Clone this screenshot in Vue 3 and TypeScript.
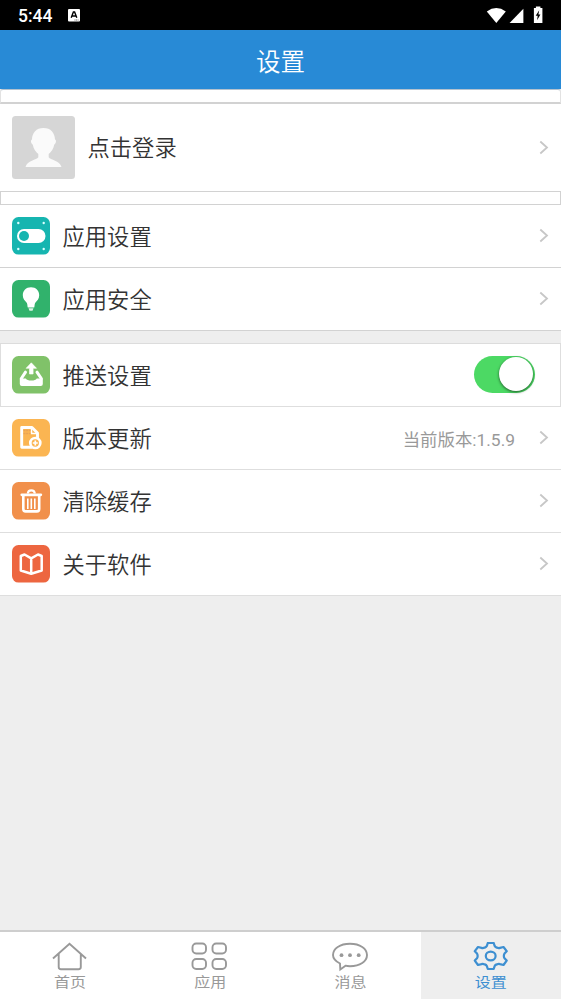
<script setup lang="ts">
type IconName = 'switch' | 'bulb' | 'push' | 'update' | 'trash' | 'book'

interface Row {
  icon: IconName
  label: string
  note?: string
  toggle?: boolean
}

const general: Row[] = [
  { icon: 'switch', label: '应用设置' },
  { icon: 'bulb', label: '应用安全' },
]

const system: Row[] = [
  { icon: 'push', label: '推送设置', toggle: true },
  { icon: 'update', label: '版本更新', note: '当前版本:1.5.9' },
  { icon: 'trash', label: '清除缓存' },
  { icon: 'book', label: '关于软件' },
]

const groups: Row[][] = [general, system]

const tabs = [
  { id: 'home', label: '首页' },
  { id: 'apps', label: '应用' },
  { id: 'message', label: '消息' },
  { id: 'settings', label: '设置' },
]
const activeTab = 'settings'
</script>

<template>
  <div class="screen">
    <div class="status">
      <span class="clock">5:44</span>
      <svg class="badge" width="12" height="13" viewBox="0 0 12 13">
        <rect width="12" height="12.6" rx="1" fill="#fff" />
        <path d="M3.2 8.8 5.4 3h1.2l2.2 5.8M4.1 7h3.8" fill="none" stroke="#000" stroke-width="1.4" />
        <path d="M6.5 11h4" stroke="#666" stroke-width="1" stroke-dasharray="1 .6" />
      </svg>
      <svg class="signals" width="58" height="18" viewBox="0 0 58 18">
        <path d="M.8 5.4Q10.3-1.2 19.8 5.4L10.3 17z" fill="#fff" />
        <path d="M37.4 2.8V17H23.6z" fill="#fff" />
        <path d="M47.900 2h2V.5h4.500V2h2v15h-8.500z" fill="#fff" />
        <path d="m53.200 4.2-3.500 5.600h2l-.6 4.400 3.300-5.700h-2z" fill="#000" />
      </svg>
    </div>

    <header class="header">设置</header>
    <div class="spacer first"></div>

    <div class="profile">
      <svg class="avatar" width="63" height="63" viewBox="0 0 63 63">
        <rect width="63" height="63" rx="3.5" fill="#d6d6d6" />
        <path
          d="M31.500 12c7.200 0 11.300 4.800 11.500 11.500 1.500.5 1.300 4-.7 5-1 4.800-3 7.500-5.600 9.500v3.200c1.700 2.800 11 3 12.800 9.800H13.500c1.800-6.800 11.100-7 12.800-9.800V38c-2.600-2-4.600-4.700-5.600-9.500-2-1-2.200-4.500-.7-5C20.200 16.800 24.300 12 31.500 12z"
          fill="#fafafa"
        />
      </svg>
      <span class="label">点击登录</span>
      <svg class="arrow" width="10" height="15" viewBox="0 0 10 15">
        <path d="m1.300 1.500 6.700 6-6.700 6" />
      </svg>
    </div>
    <div class="spacer second"></div>

    <section v-for="(rows, g) in groups" :key="g" class="group" :class="{ system: g === 1 }">
      <div v-for="row in rows" :key="row.icon" class="row" :class="{ boxed: row.toggle }">
        <svg class="icon" :class="row.icon" width="38" height="38" viewBox="0 0 38 38">
          <rect class="tile" width="38" height="37.600" rx="6.500" />
          <g v-if="row.icon === 'switch'">
            <rect x="5" y="12" width="28.500" height="14" rx="7" fill="#fff" />
            <circle cx="12" cy="19" r="5" fill="#16b5b0" />
            <g fill="#d9ffff">
              <circle cx="6.300" cy="6" r="1.200" /><circle cx="31.700" cy="6" r="1.200" />
              <circle cx="6.300" cy="32" r="1.200" /><circle cx="31.700" cy="32" r="1.200" />
            </g>
          </g>
          <g v-else-if="row.icon === 'bulb'" fill="#fff">
            <path d="M19 7.300c5 0 8.200 3.500 8.200 8 0 3.700-2.200 5.500-4.100 7.700-.7 1.500-.4 3.500-.9 4.500h-6.400c-.5-1-.2-3-.9-4.500-1.900-2.200-4.100-4-4.100-7.700 0-4.500 3.200-8 8.200-8z" />
            <path d="M16.500 28.300h5l-1 2.500h-3z" opacity=".85" />
          </g>
          <g v-else-if="row.icon === 'push'">
            <path d="M19.300 6.800 24.500 12.300h-3.400V18h-3.600v-5.700h-3.400z" fill="#fff" stroke="#fff" stroke-width=".6" stroke-linejoin="round" />
            <path d="M13.500 16.200 9.300 22.500M25 16.200l4.300 6.300" fill="none" stroke="#fff" stroke-width="3" stroke-linecap="round" />
            <path d="M7.800 22.500h6c1 1.500 2.500 2 5.500 2s4.500-.5 5.500-2h6v5.500q0 2-2 2h-19q-2 0-2-2z" fill="#fff" />
          </g>
          <g v-else-if="row.icon === 'update'" fill="none" stroke="#fff">
            <path d="M20 28.300H9.700V8.500H20l5.500 5.500v5" stroke-width="2.900" stroke-linejoin="round" />
            <path d="M19.500 9v5.500H25" stroke-width="1.500" />
            <path d="M11.500 11.500h7m-7 3h7" stroke="#e9a257" stroke-width="1.700" stroke-dasharray="2 .7" />
            <circle cx="23.300" cy="24" r="5" fill="#fbb552" stroke-width="2.700" />
            <path d="M20.800 24h5M23.300 21.500v5" stroke-width="1.700" />
          </g>
          <g v-else-if="row.icon === 'trash'" fill="none" stroke="#fff">
            <path d="M9.800 12.800h19" stroke-width="2.800" stroke-linecap="round" />
            <path d="M15.800 11.500c.3-4.300 6.700-4.300 7 0" stroke-width="2.200" />
            <path d="M11.300 14v13c0 1.700.6 2.400 2.300 2.400h11.300c1.700 0 2.300-.7 2.300-2.400V14" stroke-width="2.600" />
            <path d="M15.800 16.500v10.500M19.300 16.500v10.500M22.800 16.500v10.500" stroke-width="1.600" />
          </g>
          <g v-else fill="none" stroke="#fff" stroke-width="2.500" stroke-linejoin="round">
            <path d="M19.200 13.300 12.500 9.500 8.800 11v14.500l10.400 3.200 10.500-3.200V11L26 9.500zv15" />
          </g>
        </svg>
        <span class="label">{{ row.label }}</span>
        <span v-if="row.note" class="note">{{ row.note }}</span>
        <span v-if="row.toggle" class="toggle"><i class="knob"></i></span>
        <svg v-else class="arrow" width="10" height="15" viewBox="0 0 10 15">
          <path d="m1.300 1.500 6.700 6-6.700 6" />
        </svg>
      </div>
    </section>

    <nav class="tabs">
      <div v-for="tab in tabs" :key="tab.id" class="tab" :class="{ active: tab.id === activeTab }">
        <svg width="38" height="30" viewBox="0 0 38 30">
          <path v-if="tab.id === 'home'" d="M2 16.500 18.500 1.800 35 16.500M7.700 12v13c0 1.600.8 2.200 2.300 2.200h17.500c1.500 0 2.300-.6 2.300-2.200V12" />
          <g v-else-if="tab.id === 'apps'">
            <rect x="1.500" y="1.500" width="13.500" height="10" rx="3.700" />
            <rect x="21.500" y="1.500" width="13.500" height="10" rx="3.700" />
            <rect x="1.500" y="17" width="13.500" height="10" rx="3.700" />
            <rect x="21.500" y="17" width="13.500" height="10" rx="3.700" />
          </g>
          <g v-else-if="tab.id === 'message'">
            <path d="M8 21.500C3.800 19.400 1 17 1 13 1 6.600 8 1.800 18 1.800S35 6.600 35 13s-7 11.200-17 11.200c-2 0-3.200-.1-4.500-.5L8.300 27.500z" />
            <g class="dots"><circle cx="9.500" cy="13.200" r="1.900" /><circle cx="18" cy="13.200" r="1.900" /><circle cx="26.700" cy="13.200" r="1.900" /></g>
          </g>
          <g v-else class="gear">
            <path d="M15.800 1h5.900l1 3.100q.5 1 2 1.500 1.800.8 3.300.3l3.500-.9 3.200 4.200-2.200 2.300q-1.300 2.400 0 4.800l2.200 2.300-3.200 4.400-3.500-.9q-1.500-.5-3.300.3-1.500.5-2 1.500l-1 3.100h-5.900l-1-3.100q-.5-1-2-1.500-1.800-.8-3.300-.3l-3.500.9-3.200-4.400L5 16.300q1.300-2.400 0-4.800L2.800 9.200 6 5l3.500.9q1.500.5 3.300-.3 1.500-.5 2-1.500z" />
            <ellipse cx="18.700" cy="14" rx="4.900" ry="4.400" />
          </g>
        </svg>
        <span class="caption">{{ tab.label }}</span>
      </div>
    </nav>
  </div>
</template>

<style>
body {
  margin: 0;
  background: #eee;
}
</style>

<style scoped>
.screen {
  display: flex;
  flex-direction: column;
  height: 999px;
  overflow: hidden;
  background: #eee;
  color: #333;
  font-family: Roboto, 'Noto Sans CJK SC', sans-serif;
}
.status {
  display: flex;
  align-items: center;
  box-sizing: border-box;
  flex: none;
  height: 30px;
  padding: 0 17px 0 18px;
  background: #000;
  color: #fff;
}
.clock {
  width: 50px;
  font-size: 17.500px;
  font-weight: 500;
  line-height: 28px;
  padding-top: 2px;
}
.signals {
  margin-left: auto;
}
.header {
  flex: none;
  height: 59px;
  background: #288ad6;
  color: #fff;
  font-size: 24.500px;
  font-weight: 350;
  line-height: 65px;
  text-align: center;
}
.spacer {
  box-sizing: border-box;
  flex: 0 0 15px;
  border: 1px solid #d2d2d2;
  border-bottom-width: 2px;
  background: #fff;
}
.first {
  border-top-color: #b4c2cf;
  border-right-color: #e2e2e2;
  border-left-color: #e2e2e2;
  border-radius: 3px 3px 0 0;
}
.second {
  flex-basis: 14px;
  border-bottom-width: 1px;
}
.profile {
  display: flex;
  align-items: center;
  box-sizing: border-box;
  flex: 0 0 87px;
  padding: 0 12px;
  background: #fff;
}
.avatar {
  margin-right: 12.500px;
}
.label {
  padding-top: 1px;
  font-size: 22.300px;
  font-weight: 350;
  line-height: 30px;
  white-space: nowrap;
}
.row .label {
  padding-top: 2px;
}
.arrow {
  flex: none;
  margin-left: auto;
  fill: none;
  stroke: #c7c7c7;
  stroke-width: 1.800;
}
.row .arrow {
  margin-bottom: 1px;
}
.group {
  background: #fff;
}
.system {
  margin-top: 12px;
  border-top: 1px solid #dcdcdc;
}
.row {
  display: flex;
  align-items: center;
  box-sizing: border-box;
  height: 63px;
  padding: 0 12px;
  border-bottom: 1px solid #d2d2d2;
}
.system .row {
  border-bottom-color: #dedede;
}
.row.boxed {
  padding: 0 25px 0 11px;
  border-left: 1px solid #dedede;
  border-right: 1px solid #dedede;
}
.icon {
  flex: none;
  margin-right: 12.500px;
}
.switch .tile { fill: #16b5b0; }
.bulb .tile { fill: #31b26c; }
.push .tile { fill: #80c269; }
.update .tile { fill: #fbb552; }
.trash .tile { fill: #f1904b; }
.book .tile { fill: #ed6640; }
.note {
  margin-left: auto;
  margin-right: 24px;
  color: #999;
  font-size: 17.400px;
  font-weight: 400;
}
.note + .arrow {
  margin-left: 0;
}
.toggle {
  display: flex;
  justify-content: flex-end;
  box-sizing: border-box;
  width: 61px;
  height: 37px;
  margin-left: auto;
  margin-bottom: 1px;
  padding: 1px 2px;
  border-radius: 19px;
  background: #4cd964;
}
.knob {
  width: 34px;
  height: 34px;
  border-radius: 50%;
  background: #fff;
  box-shadow: 0 1px 3px rgba(0, 0, 0, 0.6);
}
.tabs {
  display: flex;
  box-sizing: border-box;
  height: 69px;
  margin-top: auto;
  border-top: 2px solid #cecece;
  background: #fff;
}
.tab {
  display: flex;
  flex: 1;
  flex-direction: column;
  align-items: center;
  padding-top: 10px;
  color: #999;
}
.tab svg {
  flex: none;
  fill: none;
  stroke: currentColor;
  stroke-width: 1.900;
}
.tab .dots {
  fill: currentColor;
  stroke: none;
}
.tab .gear {
  stroke-width: 2.200;
  stroke-linejoin: round;
}
.active {
  background: #eee;
  color: #3d8fd1;
}
.caption {
  padding-top: 1px;
  font-size: 16px;
  line-height: 20px;
  transform: scaleY(0.82);
}
</style>
